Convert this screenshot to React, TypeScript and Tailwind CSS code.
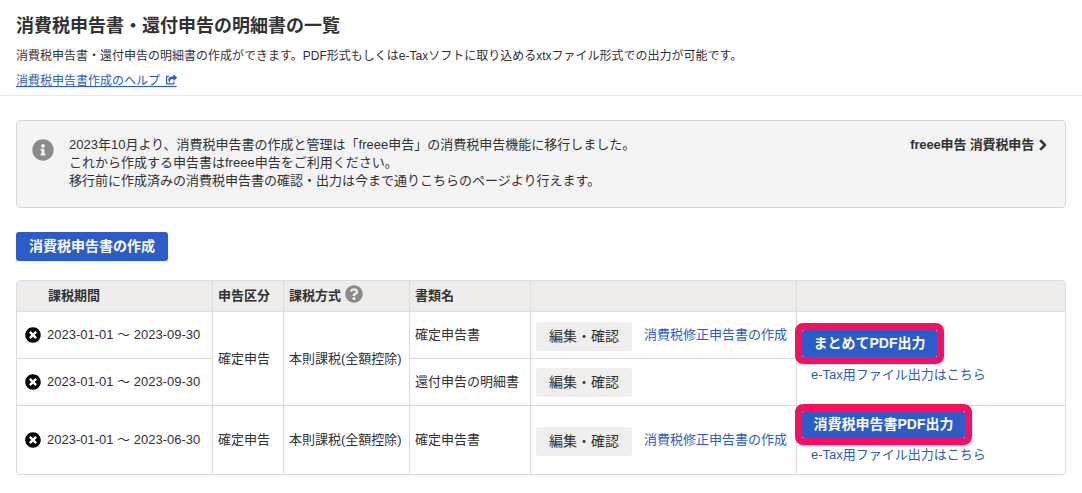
import { FaChevronRight, FaInfoCircle, FaQuestionCircle, FaShareSquare, FaTimesCircle } from "react-icons/fa";

function Period({ text }: { text: string }) {
  return (
    <div className="flex items-center gap-[6px] pl-[3px]">
      <FaTimesCircle className="text-[16px] text-black" />
      <span>{text}</span>
    </div>
  );
}

function Edit({ single }: { single?: boolean }) {
  return (
    <button className={single ? "mt-[1px] block h-[29px] w-[96px] rounded-[3px] bg-[#f0efee] text-[14px] text-[#323232]" : "mt-[2px] block h-[29px] w-[96px] rounded-[3px] bg-[#f0efee] text-[14px] text-[#323232]"}>編集・確認</button>
  );
}

function Pdf({ label }: { label: string }) {
  return (
    <button className="block h-[27px] rounded-[2px] bg-[#2b5cc9] px-[11.5px] text-[14px] font-bold text-white">{label}</button>
  );
}

function Highlight({ label }: { label: string }) {
  return (
    <div className="w-fit rounded-[8px] border-[7px] border-[#fb0e5f]">
      <Pdf label={label} />
    </div>
  );
}

const th = "border border-[#dedddc] bg-[#eeedeb] px-[5px] text-left text-[13px] font-bold";
const td = "border border-[#dedddc] px-[5px] align-middle";

export default function App() {
  return (
    <div className="h-[493px] w-[1082px] overflow-hidden bg-white text-[#323232] [font-family:'Liberation_Sans','Noto_Sans_CJK_JP',sans-serif]">
      <div className="border-b border-[#ecebea] pb-[5px] pl-[16px]">
        <h1 className="pt-[13px] text-[18px] leading-[27px] font-bold">消費税申告書・還付申告の明細書の一覧</h1>
        <p className="mt-[8px] text-[12px] leading-[17px]">消費税申告書・還付申告の明細書の作成ができます。PDF形式もしくはe-Taxソフトに取り込めるxtxファイル形式での出力が可能です。</p>
        <a className="mt-[8px] block w-fit text-[12px] leading-[17px] text-[#2b5cc9] underline">
          消費税申告書作成のヘルプ
          <span className="relative">
            &nbsp;&nbsp;&nbsp;&nbsp;&nbsp;
            <FaShareSquare className="absolute top-0 right-0 text-[11px]" />
          </span>
        </a>
      </div>

      <div className="mx-[16px] mt-[24px] flex h-[88px] justify-between rounded-[4px] border border-[#d8d7d6] bg-[#f5f4f4] pt-[15px] pr-[16px] pl-[15px]">
        <div className="flex gap-[15px]">
          <FaInfoCircle className="mt-[3px] text-[22px] text-[#8c8b8a]" />
          <p className="text-[13px] leading-[18px]">
            2023年10月より、消費税申告書の作成と管理は「freee申告」の消費税申告機能に移行しました。<br />
            これから作成する申告書はfreee申告をご利用ください。<br />
            移行前に作成済みの消費税申告書の確認・出力は今まで通りこちらのページより行えます。
          </p>
        </div>
        <a className="flex h-[18px] items-center gap-[3px] text-[13px] font-bold tracking-[-0.15px]">
          freee申告 消費税申告
          <FaChevronRight className="text-[12px] [stroke-width:40px] [stroke:currentColor]" />
        </a>
      </div>

      <button className="mt-[24px] ml-[16px] block h-[29px] rounded-[3px] bg-[#2b5cc9] px-[13px] text-[14px] font-bold text-white">消費税申告書の作成</button>

      <div className="mx-[16px] mt-[19px] overflow-hidden rounded-[4px] border border-[#dedddc]">
        <table className="-m-px w-[1052px] table-fixed border-collapse text-[13px]">
          <colgroup>
            <col className="w-[196px]" />
            <col className="w-[71px]" />
            <col className="w-[126px]" />
            <col className="w-[121px]" />
            <col className="w-[266px]" />
            <col />
          </colgroup>
          <thead>
            <tr className="h-[31px]">
              <th className={th}><span className="pl-[26px]">課税期間</span></th>
              <th className={th}>申告区分</th>
              <th className={th}>
                <span className="flex items-center gap-[4px]">課税方式<FaQuestionCircle className="-mt-[4px] text-[18px] text-[#8c8b8a]" /></span>
              </th>
              <th className={th}>書類名</th>
              <th className={th}></th>
              <th className={th}></th>
            </tr>
          </thead>
          <tbody>
            <tr className="h-[47px]">
              <td className={td}><Period text="2023-01-01 ～ 2023-09-30" /></td>
              <td className={td} rowSpan={2}>確定申告</td>
              <td className={td} rowSpan={2}>本則課税(全額控除)</td>
              <td className={td}>確定申告書</td>
              <td className={td}>
                <div className="flex items-center gap-[12px]"><Edit /><a className="text-[#2b5cc9]">消費税修正申告書の作成</a></div>
              </td>
              <td className="border border-[#dedddc] align-top" rowSpan={2}>
                <div className="-ml-[2px] flex flex-col pt-[11px]">
                  <Highlight label="まとめてPDF出力" />
                  <a className="mt-[1px] ml-[16px] text-[#2b5cc9]">e-Tax用ファイル出力はこちら</a>
                </div>
              </td>
            </tr>
            <tr className="h-[47px]">
              <td className={td}><Period text="2023-01-01 ～ 2023-09-30" /></td>
              <td className={td}>還付申告の明細書</td>
              <td className={td}><Edit single /></td>
            </tr>
            <tr className="h-[69px]">
              <td className={td}><Period text="2023-01-01 ～ 2023-06-30" /></td>
              <td className={td}>確定申告</td>
              <td className={td}>本則課税(全額控除)</td>
              <td className={td}>確定申告書</td>
              <td className={td}>
                <div className="flex items-center gap-[12px]"><Edit /><a className="text-[#2b5cc9]">消費税修正申告書の作成</a></div>
              </td>
              <td className="border border-[#dedddc] align-top">
                <div className="-mt-[2px] -ml-[2px] flex flex-col">
                  <Highlight label="消費税申告書PDF出力" />
                  <a className="ml-[16px] text-[#2b5cc9]">e-Tax用ファイル出力はこちら</a>
                </div>
              </td>
            </tr>
          </tbody>
        </table>
      </div>
    </div>
  );
}
